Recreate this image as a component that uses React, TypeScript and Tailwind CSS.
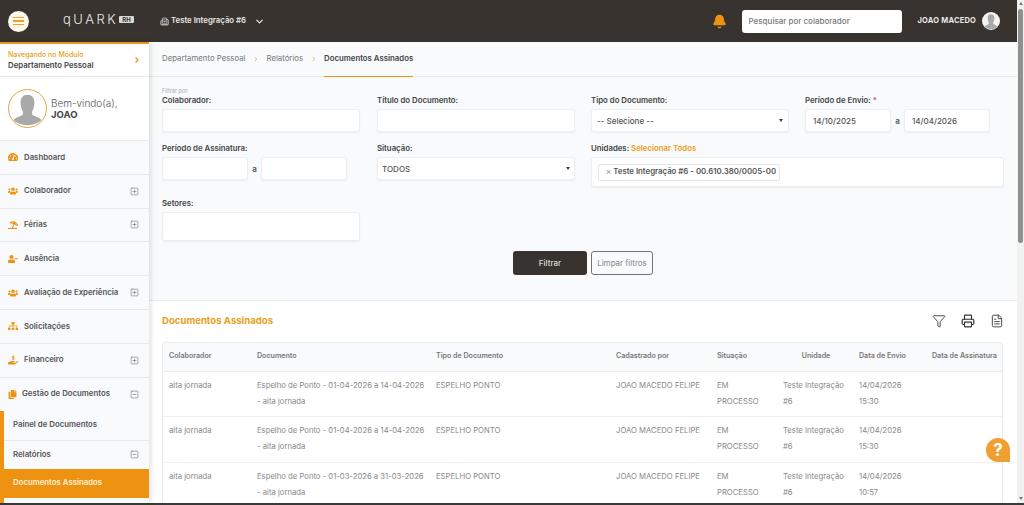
import React from 'react';
import { Building2, ChevronDown, ChevronRight, Bell, Filter, Printer, FileText, SquarePlus, SquareMinus } from 'lucide-react';
import { FaTachometerAlt, FaUsers, FaUmbrellaBeach, FaUserMinus, FaSitemap, FaHandHoldingUsd, FaCopy } from 'react-icons/fa';

const orange = 'text-[#ee9212]';

const menuItems = [
  { label: 'Colaborador', icon: FaUsers, plus: true },
  { label: 'Férias', icon: FaUmbrellaBeach, plus: true },
  { label: 'Ausência', icon: FaUserMinus, plus: false },
  { label: 'Avaliação de Experiência', icon: FaUsers, plus: true },
  { label: 'Solicitações', icon: FaSitemap, plus: false },
  { label: 'Financeiro', icon: FaHandHoldingUsd, plus: true },
];

const rows = [
  { doc: 'Espelho de Ponto - 01-04-2026 a 14-04-2026', hour: '15:30' },
  { doc: 'Espelho de Ponto - 01-04-2026 a 14-04-2026', hour: '15:30' },
  { doc: 'Espelho de Ponto - 01-03-2026 a 31-03-2026', hour: '10:57' },
];

function Avatar({ className }: { className: string }) {
  return (
    <svg viewBox="0 0 40 40" className={className}>
      <path d="M20 5c-5 0-7.500 3.500-7.500 8.500 0 4 1 7 2.500 9.500v3.500c-2 2-8 3-10 6 3 3.500 9 5.500 15 5.500s12-2 15-5.500c-2-3-8-4-10-6V23c1.500-2.500 2.500-5.500 2.500-9.500C27.500 8.500 25 5 20 5z" fill="#a9a9a9" />
    </svg>
  );
}

function Label({ children }: { children: React.ReactNode }) {
  return <div className="text-[7.800px] leading-[10px] font-semibold text-[#444] mb-[4px]">{children}</div>;
}

function Box({ className = '', children }: { className?: string; children?: React.ReactNode }) {
  return (
    <div className={`bg-white border border-[#eceff1] rounded-[3px] shadow-[0_1px_2px_rgba(0,0,0,0.06)] flex items-center text-[8px] font-medium text-[#555] ${className}`}>
      {children}
    </div>
  );
}

function Caret() {
  return <span className="ml-auto w-0 h-0 border-x-[2px] border-x-transparent border-t-[3px] border-t-[#444]" />;
}

function MenuRow({ label, icon: Icon, plus }: { label: string; icon: React.ComponentType<{ className?: string }>; plus?: boolean }) {
  return (
    <div className="h-[33.800px] shrink-0 border-b border-[#e6e8ea] flex items-center pl-[8px] pr-[10px] text-[7.800px] font-semibold text-[#555]">
      <Icon className={`w-[10px] h-[10px] ${orange} mr-[6px] shrink-0`} />
      <span>{label}</span>
      {plus && <SquarePlus className="ml-auto w-[9px] h-[9px] text-[#666]" strokeWidth={1.500} />}
    </div>
  );
}

export default function App() {
  return (
    <div className="w-[1024px] h-[505px] overflow-hidden flex flex-col bg-white font-['Inter','Liberation_Sans',sans-serif] relative">
      <div className="flex-1 min-h-0 flex">
        <div className="flex-1 min-w-0 flex flex-col">
          {/* Header */}
          <header className="h-[42px] shrink-0 bg-[#38332e] flex items-center text-white">
            <div className="ml-[8px] w-[21px] h-[21px] rounded-full bg-[#fdf8ea] flex flex-col items-center justify-center gap-[2px]">
              <span className="w-[11px] h-[1.500px] bg-[#eda02a]" />
              <span className="w-[11px] h-[1.500px] bg-[#eda02a]" />
              <span className="w-[11px] h-[1.500px] bg-[#eda02a]" />
            </div>
            <div className="ml-[34px] flex items-center w-[97px] mb-[4px]">
              <span className="text-[13px] font-light tracking-[2.500px] text-[#e8e8e8] leading-none">qUARK</span>
              <span className="ml-[1px] bg-[#d9d9d9] text-[#38332e] text-[6px] font-bold w-[15px] text-center leading-[7px] rounded-[1px]">RH</span>
            </div>
            <Building2 className="w-[9px] h-[9px] text-[#ddd]" />
            <span className="ml-[2px] text-[7.800px] font-semibold text-[#e8e8e8]">Teste Integração #6</span>
            <ChevronDown className="ml-[8px] w-[11px] h-[11px] text-[#eee]" strokeWidth={2.500} />
            <Bell className={`ml-auto w-[15px] h-[15px] ${orange}`} fill="currentColor" />
            <div className="ml-[15px] w-[160px] h-[23px] bg-white rounded-[3px] flex items-center pl-[7px] text-[8px] font-medium text-[#777]">Pesquisar por colaborador</div>
            <span className="ml-[16px] text-[7.500px] font-bold text-[#e8e8e8] tracking-[0.2px]">JOAO MACEDO</span>
            <div className="ml-[6px] mr-[17px] w-[18px] h-[18px] rounded-full bg-[#f3f3f3] overflow-hidden">
              <Avatar className="w-full h-full" />
            </div>
          </header>

          <div className="flex-1 min-h-0 flex">
            {/* Sidebar */}
            <aside className="w-[149px] shrink-0 flex flex-col overflow-hidden bg-[#f9fafb] border-t-[2px] border-[#e8961c] shadow-[2px_0_5px_rgba(0,0,0,0.12)] z-10">
              <div className="h-[33px] shrink-0 bg-white border-b border-[#e6e8ea] flex items-center pl-[8px] pr-[8px]">
                <div>
                  <div className="text-[7px] leading-[10px] font-medium text-[#e8a020]">Navegando no Módulo</div>
                  <div className="text-[7.800px] leading-[11px] font-semibold text-[#444]">Departamento Pessoal</div>
                </div>
                <ChevronRight className={`ml-auto w-[8px] h-[8px] ${orange}`} strokeWidth={4} />
              </div>
              <div className="h-[64px] shrink-0 bg-white border-b border-[#e6e8ea] flex items-center pl-[8px]">
                <div className="w-[39px] h-[39px] rounded-full border border-[#e4a73f] overflow-hidden bg-white">
                  <Avatar className="w-full h-full" />
                </div>
                <div className="ml-[4px]">
                  <div className="text-[10px] leading-[12px] font-light text-[#555]">Bem-vindo(a),</div>
                  <div className="text-[9.500px] leading-[12px] font-bold text-[#444]">JOAO</div>
                </div>
              </div>
              <MenuRow label="Dashboard" icon={FaTachometerAlt} />
              {menuItems.map((item) => (
                <MenuRow key={item.label} {...item} />
              ))}
              <div className="h-[33px] shrink-0 flex items-center pl-[8px] pr-[10px] text-[7.800px] font-semibold text-[#555]">
                <FaCopy className={`w-[9px] h-[9px] ${orange} mr-[5px]`} />
                <span>Gestão de Documentos</span>
                <SquareMinus className="ml-auto w-[9px] h-[9px] text-[#666]" strokeWidth={1.500} />
              </div>
              <div className="flex-1 border-l-[4px] border-[#ee9212] flex flex-col">
                <div className="h-[30px] shrink-0 border-b border-[#e6e8ea] flex items-center pl-[9px] text-[7.800px] font-semibold text-[#555]">Painel de Documentos</div>
                <div className="h-[28px] shrink-0 flex items-center pl-[9px] pr-[10px] text-[7.800px] font-semibold text-[#555]">
                  <span>Relatórios</span>
                  <SquareMinus className="ml-auto w-[9px] h-[9px] text-[#666]" strokeWidth={1.500} />
                </div>
                <div className="h-[29px] shrink-0 bg-[#ee9212] flex items-center pl-[9px] text-[7.800px] font-semibold text-[#fdf0d8]">Documentos Assinados</div>
              </div>
            </aside>

            {/* Main */}
            <main className="flex-1 min-w-0 flex flex-col bg-[#f8fafb]">
              <nav className="h-[35px] shrink-0 border-b border-[#e4e7ea] flex items-stretch pl-[13px] text-[7.800px] text-[#777]">
                <span className="self-center">Departamento Pessoal</span>
                <ChevronRight className={`self-center mx-[7.500px] w-[6px] h-[6px] ${orange}`} strokeWidth={3} />
                <span className="self-center">Relatórios</span>
                <ChevronRight className={`self-center mx-[7.500px] w-[6px] h-[6px] ${orange}`} strokeWidth={3} />
                <span className="flex items-center -mb-[1px] border-b-[1.500px] border-[#ee9212] font-semibold text-[#444]">Documentos Assinados</span>
              </nav>

              <section className="h-[224px] shrink-0 border-b border-[#e8eaec] pl-[13px] pt-[10px]">
                <div className="text-[5.500px] leading-[8px] text-[#aaa]">Filtrar por:</div>
                <div className="grid grid-cols-[199px_198px_198px_186px] gap-x-[16px]">
                  <div>
                    <Label>Colaborador:</Label>
                    <Box className="w-[198px] h-[23px]" />
                  </div>
                  <div>
                    <Label>Título do Documento:</Label>
                    <Box className="w-[198px] h-[23px]" />
                  </div>
                  <div>
                    <Label>Tipo do Documento:</Label>
                    <Box className="w-[198px] h-[23px] px-[5px]">
                      -- Selecione --
                      <Caret />
                    </Box>
                  </div>
                  <div>
                    <Label>
                      Período de Envio: <span className="text-[#d9534f]">*</span>
                    </Label>
                    <div className="flex items-center">
                      <Box className="w-[86px] h-[23px] pl-[7px]">14/10/2025</Box>
                      <span className="w-[13px] text-center text-[8px] font-semibold text-[#555]">a</span>
                      <Box className="w-[86px] h-[23px] pl-[7px]">14/04/2026</Box>
                    </div>
                  </div>
                  <div className="mt-[11px]">
                    <Label>Período de Assinatura:</Label>
                    <div className="flex items-center">
                      <Box className="w-[86px] h-[23px]" />
                      <span className="w-[13px] text-center text-[8px] font-semibold text-[#555]">a</span>
                      <Box className="w-[86px] h-[23px]" />
                    </div>
                  </div>
                  <div className="mt-[11px]">
                    <Label>Situação:</Label>
                    <Box className="w-[198px] h-[23px] px-[4px]">
                      TODOS
                      <Caret />
                    </Box>
                  </div>
                  <div className="mt-[11px] col-span-2 w-[413px]">
                    <Label>
                      Unidades: <span className="text-[#e8a020]">Selecionar Todos</span>
                    </Label>
                    <Box className="h-[30px] px-[6px]">
                      <div className="h-[17px] border border-[#e4e6e8] rounded-[2px] flex items-center pl-[7px] pr-[3px] text-[7.800px] font-semibold">
                        <span className="text-[#aaa] mr-[2px]">×</span>Teste Integração #6 - 00.610.380/0005-00
                      </div>
                    </Box>
                  </div>
                  <div className="mt-[11px]">
                    <Label>Setores:</Label>
                    <Box className="w-[198px] h-[29px]" />
                  </div>
                </div>
                <div className="flex justify-center gap-[4px] mt-[10px] pr-[13px]">
                  <div className="w-[74px] h-[24px] bg-[#38332e] rounded-[3px] flex items-center justify-center text-[8px] font-medium text-[#ddd]">Filtrar</div>
                  <div className="w-[62px] h-[24px] border border-[#77736e] rounded-[3px] flex items-center justify-center text-[8px] text-[#888]">Limpar filtros</div>
                </div>
              </section>

              <section className="flex-1 min-h-0 overflow-hidden bg-white pl-[13px] pr-[14px]">
                <div className="h-[41px] flex items-center">
                  <h2 className="text-[9.600px] font-bold text-[#e8a020]">Documentos Assinados</h2>
                  <div className="ml-auto -mr-[1px] mb-[1px] flex items-center gap-[15px] text-[#333]">
                    <Filter className="w-[14px] h-[14px]" strokeWidth={1.500} />
                    <Printer className="w-[14px] h-[14px]" strokeWidth={2} />
                    <FileText className="w-[14px] h-[14px]" strokeWidth={1.500} />
                  </div>
                </div>
                <div className="border border-b-0 border-[#e8eaec] rounded-t-[4px] overflow-hidden">
                  <table className="w-full table-fixed text-[7.700px] text-[#888]">
                    <colgroup>
                      <col className="w-[94px]" />
                      <col className="w-[179px]" />
                      <col className="w-[180px]" />
                      <col className="w-[101px]" />
                      <col className="w-[66px]" />
                      <col className="w-[76px]" />
                      <col className="w-[73px]" />
                      <col />
                    </colgroup>
                    <thead>
                      <tr className="h-[28px] bg-[#f8fafb] border-b border-[#e8eaec] text-left text-[7.100px] text-[#777]">
                        <th className="pl-[6px] font-semibold">Colaborador</th>
                        <th className="font-semibold">Documento</th>
                        <th className="font-semibold">Tipo de Documento</th>
                        <th className="font-semibold">Cadastrado por</th>
                        <th className="font-semibold">Situação</th>
                        <th className="font-semibold text-center pr-[10px]">Unidade</th>
                        <th className="font-semibold">Data de Envio</th>
                        <th className="font-semibold">Data de Assinatura</th>
                      </tr>
                    </thead>
                    <tbody>
                      {rows.map((r, i) => (
                        <tr key={i} className="h-[45.700px] border-b border-[#eef0f2] align-top leading-[16px]">
                          <td className="pl-[6px] pt-[6px]">aita jornada</td>
                          <td className="pt-[6px]">{r.doc}<br />- aita jornada</td>
                          <td className="pt-[6px]">ESPELHO PONTO</td>
                          <td className="pt-[6px]">JOAO MACEDO FELIPE</td>
                          <td className="pt-[6px]">EM<br />PROCESSO</td>
                          <td className="pt-[6px]">Teste Integração<br />#6</td>
                          <td className="pt-[6px]">14/04/2026<br />{r.hour}</td>
                          <td />
                        </tr>
                      ))}
                    </tbody>
                  </table>
                </div>
              </section>
            </main>
          </div>
        </div>

        {/* Scrollbar */}
        <div className="w-[7px] shrink-0 bg-[#f1f1f1] flex flex-col items-center pt-[2px] pb-[3px]">
          <span className="w-0 h-0 border-x-[2.500px] border-x-transparent border-b-[3px] border-b-[#777]" />
          <div className="mt-[4px] w-[5px] h-[234px] rounded-[3px] bg-[#8f8f8f]" />
          <span className="mt-auto w-0 h-0 border-x-[2.500px] border-x-transparent border-t-[3px] border-t-[#777]" />
        </div>
      </div>

      <div className="h-[2px] shrink-0 bg-[#3a3a3a]" />

      {/* Help bubble sits over the page */}
      <div className="absolute left-[986px] top-[438px] w-[24px] h-[24px] rounded-full rounded-br-[3px] bg-[#f0a030] flex items-center justify-center text-white text-[17px] font-bold leading-none">?</div>
    </div>
  );
}
